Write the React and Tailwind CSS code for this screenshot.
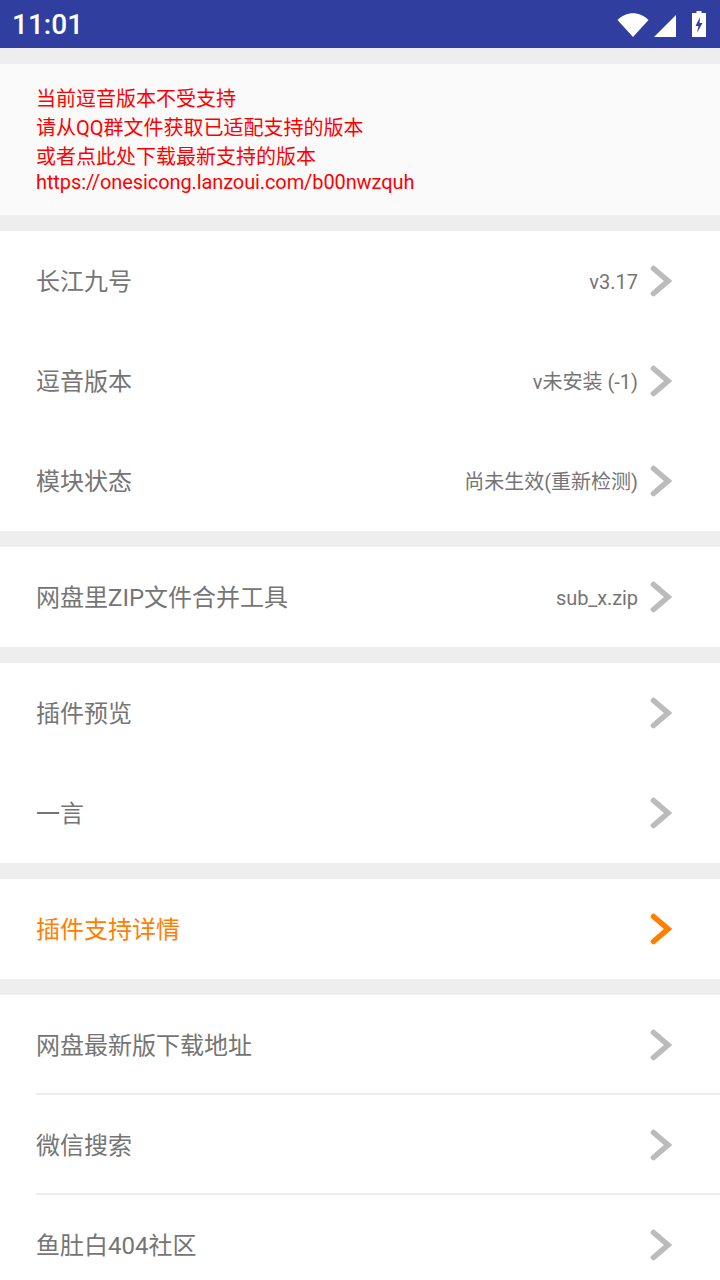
import React from "react";

const fontStack = "font-['Roboto','Noto_Sans_CJK_SC',sans-serif]";

const groups = [
  [
    { title: "长江九号", value: "v3.17" },
    { title: "逗音版本", value: "v未安装 (-1)" },
    { title: "模块状态", value: "尚未生效(重新检测)" },
  ],
  [{ title: "网盘里ZIP文件合并工具", value: "sub_x.zip", tight: true }],
  [{ title: "插件预览" }, { title: "一言" }],
  [{ title: "插件支持详情", accent: true }],
  [
    { title: "网盘最新版下载地址", divider: true },
    { title: "微信搜索", divider: true },
    { title: "鱼肚白404社区" },
  ],
];

const Chevron = ({ color }) => (
  <svg width="22" height="32" viewBox="0 0 22 32" fill="none" className="shrink-0">
    <path
      d="M3.5 3.5 L18 16 L3.5 28.5"
      stroke={color}
      strokeWidth="5.6"
      strokeLinecap="round"
      strokeLinejoin="miter"
    />
  </svg>
);

const StatusBar = () => (
  <div className="h-12 shrink-0 bg-[#303f9f] flex items-center justify-between pl-3 pr-[14px]">
    <span className="text-white text-[28px] leading-none font-medium font-['Roboto',sans-serif] mt-[2px]">
      11:01
    </span>
    <div className="flex items-start h-[26px] mt-[-1px]">
      <svg width="32" height="26" viewBox="0 0 32 26" className="mr-[5px]">
        <path d="M0.5 9 C9 0 23 0 31.5 9 L16 26 Z" fill="#fff" />
      </svg>
      <svg width="22" height="26" viewBox="0 0 22 26" className="mr-4">
        <path d="M0 26 L22 4 V26 Z" fill="#fff" />
      </svg>
      <svg width="14" height="26" viewBox="0 0 14 26">
        <path d="M4.5 0 H9.5 V2 H14 V26 H0 V2 H4.5 Z" fill="#fff" />
        <path d="M8 6 L3.5 15 H6.5 L5 22 L10.5 12 H7.5 Z" fill="#303f9f" />
      </svg>
    </div>
  </div>
);

const Row = ({ title, value, accent, divider, tight }) => (
  <div className="h-[100px] pl-9">
    <div
      className={`h-full flex items-center ${
        divider ? "pt-[2px] border-b-2 border-[#eeeeee]" : ""
      }`}
    >
      <span
        className={`text-2xl mt-[2px] ${accent ? "text-[#ff8000]" : "text-[#757575]"}`}
      >
        {title}
      </span>
      {value && (
        <span
          className={`ml-auto text-[20px] mt-[2px] text-[#757575] ${
            tight ? "tracking-[-0.1px]" : ""
          }`}
        >
          {value}
        </span>
      )}
      <div className={`${value ? "ml-3" : "ml-auto"} mr-[48px]`}>
        <Chevron color={accent ? "#ff8000" : "#bbbbbb"} />
      </div>
    </div>
  </div>
);

export default function App() {
  return (
    <div
      className={`w-[720px] h-[1280px] overflow-hidden flex flex-col bg-[#eeeeee] ${fontStack}`}
    >
      <StatusBar />
      <div className="mt-4 h-[151px] shrink-0 bg-[#fafafa] pl-9 pt-[21px] text-[20px] text-[#ff0000]">
        <div className="h-[29px] leading-[29px]">当前逗音版本不受支持</div>
        <div className="h-[29px] leading-[29px]">请从QQ群文件获取已适配支持的版本</div>
        <div className="h-[26px] leading-[29px]">或者点此处下载最新支持的版本</div>
        <div className="h-[26px] leading-[26px] tracking-[-0.1px]">https://onesicong.lanzoui.com/b00nwzquh</div>
      </div>
      {groups.map((rows, i) => (
        <div key={i} className="mt-4 shrink-0 bg-white">
          {rows.map((row) => (
            <Row key={row.title} {...row} />
          ))}
        </div>
      ))}
    </div>
  );
}
